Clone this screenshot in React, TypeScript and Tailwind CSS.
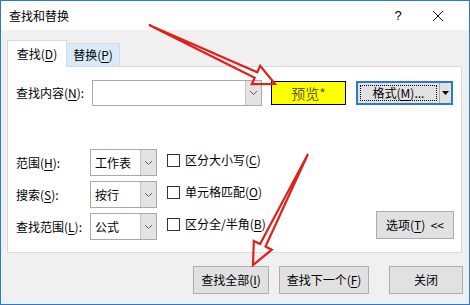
import React from 'react';

const Chevron: React.FC = () => (
  <svg width="9" height="6" viewBox="0 0 9 6">
    <path d="M1 1 L4.5 4.5 L8 1" fill="none" stroke="#606060" strokeWidth="1" />
  </svg>
);

const Combo: React.FC<{ text?: string; w: string }> = ({ text, w }) => (
  <div className={`${w} h-full flex border border-[#a9a9a9] bg-white`}>
    <div className="flex-1 flex items-center pl-[4px] text-[12px] text-black">{text}</div>
    <div className="w-[16px] flex items-center justify-center bg-[#e3e3e3] border-l border-[#c4c4c4]">
      <Chevron />
    </div>
  </div>
);

const Mn: React.FC<{ c: string }> = ({ c }) => <span className="underline underline-offset-2">{c}</span>;

const Check: React.FC<{ children: React.ReactNode }> = ({ children }) => (
  <div className="h-[22px] flex items-center gap-[5px]">
    <div className="w-[13px] h-[13px] border border-[#333] bg-white" />
    <span>{children}</span>
  </div>
);

const Btn: React.FC<{ w: string; children: React.ReactNode }> = ({ w, children }) => (
  <div className={`${w} h-[28px] flex items-center justify-center bg-[#e1e1e1] border border-[#adadad] text-[12px]`}>
    {children}
  </div>
);

export default function App() {
  return (
    <div className="relative w-[470px] h-[305px] overflow-hidden border border-[#2b79d0] bg-[#f0f0f0] flex flex-col font-['Noto_Sans_CJK_SC','Noto_Sans',sans-serif] text-[12px] text-black leading-none">
      {/* title bar */}
      <div className="h-[29px] bg-white flex items-center pl-[8px]">
        <span className="text-[12px]">查找和替换</span>
        <div className="ml-auto flex items-center">
          <span className="w-[46px] text-center text-[13px] font-['Liberation_Sans',sans-serif]">?</span>
          <svg className="ml-[2px] mr-[16px]" width="30" height="12" viewBox="0 0 30 12">
            <path d="M10 1 L20 11 M20 1 L10 11" stroke="#111" strokeWidth="1" />
          </svg>
        </div>
      </div>

      {/* body */}
      <div className="flex-1 pl-[6px] pt-[10px]">
        <div className="flex items-end h-[26px]">
          <div className="relative z-10 -mb-px w-[60px] h-[27px] bg-white border border-[#d9d9d9] border-b-0 flex items-center justify-center">
            查找(<Mn c="D" />)
          </div>
          <div className="w-[53px] h-[23px] bg-[#d8eaf9] border border-[#d9d9d9] border-l-0 border-b-0 flex items-center justify-center">
            替换(<Mn c="P" />)
          </div>
        </div>

        <div className="w-[455px] h-[187px] bg-white border border-[#d9d9d9] pl-[8px] pr-[7px] pt-[13px] flex flex-col">
          <div className="flex items-center h-[26px]">
            <div className="w-[76px]">
              查找内容(<Mn c="N" />):
            </div>
            <Combo w="w-[170px]" />
            <div className="ml-[9px] w-[75px] h-[24px] bg-[#ffff00] border border-black flex items-center justify-center text-[14px] text-[#5f5f14]">
              预览*
            </div>
            <div className="ml-[10px] w-[97px] h-[24px] border-2 border-[#2c7bcb] bg-[#e1e1e1] flex">
              <div className="flex-1 m-[2px] border border-dotted border-black flex items-center justify-center">
                格式(<Mn c="M" />)...
              </div>
              <div className="w-[12px] border-l border-[#adadad] flex items-center justify-center">
                <svg width="7" height="4" viewBox="0 0 7 4">
                  <path d="M0 0 L7 0 L3.5 4 Z" fill="#000" />
                </svg>
              </div>
            </div>
          </div>

          <div className="mt-[43px] flex">
            <div className="flex flex-col gap-[5px]">
              <div className="flex items-center h-[27px]">
                <div className="w-[74px]">范围(<Mn c="H" />):</div>
                <Combo w="w-[67px]" text="工作表" />
              </div>
              <div className="flex items-center h-[27px]">
                <div className="w-[74px]">搜索(<Mn c="S" />):</div>
                <Combo w="w-[67px]" text="按行" />
              </div>
              <div className="flex items-center h-[27px]">
                <div className="w-[74px]">查找范围(<Mn c="L" />):</div>
                <Combo w="w-[67px]" text="公式" />
              </div>
            </div>
            <div className="ml-[10px] flex flex-col gap-[10px]">
              <Check>区分大小写(<Mn c="C" />)</Check>
              <Check>单元格匹配(<Mn c="O" />)</Check>
              <Check>区分全/半角(<Mn c="B" />)</Check>
            </div>
            <div className="ml-auto self-end mb-[1px]">
              <Btn w="w-[78px]">
                选项(<Mn c="T" />)&nbsp;&nbsp;&lt;&lt;
              </Btn>
            </div>
          </div>
        </div>

        <div className="mt-[13px] flex justify-end pr-[6px] gap-[10px]">
          <Btn w="w-[76px]">查找全部(<Mn c="I" />)</Btn>
          <Btn w="w-[90px]">查找下一个(<Mn c="F" />)</Btn>
          <div className="ml-[10px]">
            <Btn w="w-[74px]">关闭</Btn>
          </div>
        </div>
      </div>

      {/* annotation arrows */}
      <svg className="absolute left-0 top-0 pointer-events-none" width="470" height="305" viewBox="0 0 470 305">
        <polygon
          points="148,24 256.3,71.3 259.2,64.9 274,83 250.8,83.1 253.7,76.7"
          fill="none"
          stroke="#e0201b"
          strokeWidth="2.2"
          strokeLinejoin="miter"
        />
        <polygon
          points="307,153 264.5,245.6 270.8,248.7 252,264 252.8,239.9 259.1,243"
          fill="none"
          stroke="#e0201b"
          strokeWidth="2.2"
          strokeLinejoin="miter"
        />
      </svg>
    </div>
  );
}
